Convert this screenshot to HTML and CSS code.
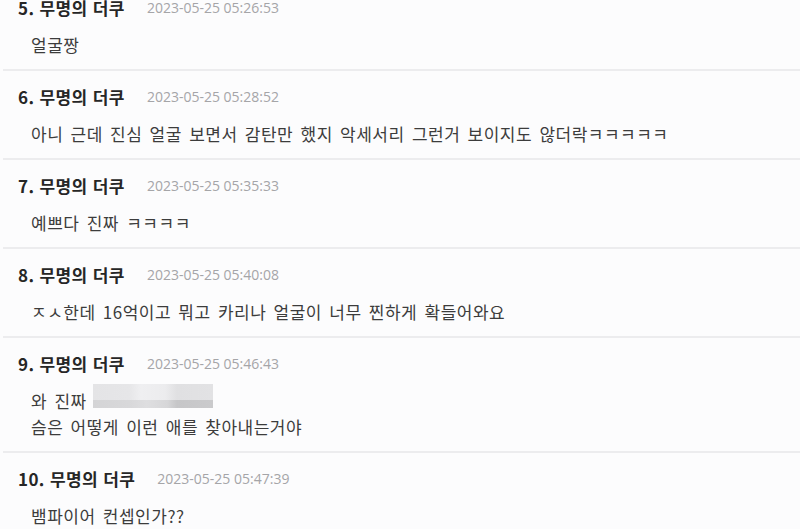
FILE: index.html
```html
<!DOCTYPE html>
<html lang="ko">
<head>
<meta charset="utf-8">
<title>댓글</title>
<link rel="stylesheet" href="styles.css">
</head>
<body>
<ul class="comments">
  <li class="comment">
    <div class="meta"><span class="author">5. 무명의 더쿠</span><span class="time">2023-05-25 05:26:53</span></div>
    <p class="text">얼굴짱</p>
  </li>
  <li class="comment">
    <div class="meta"><span class="author">6. 무명의 더쿠</span><span class="time">2023-05-25 05:28:52</span></div>
    <p class="text">아니 근데 진심 얼굴 보면서 감탄만 했지 악세서리 그런거 보이지도 않더락ㅋㅋㅋㅋㅋ</p>
  </li>
  <li class="comment">
    <div class="meta"><span class="author">7. 무명의 더쿠</span><span class="time">2023-05-25 05:35:33</span></div>
    <p class="text">예쁘다 진짜 ㅋㅋㅋㅋ</p>
  </li>
  <li class="comment">
    <div class="meta"><span class="author">8. 무명의 더쿠</span><span class="time">2023-05-25 05:40:08</span></div>
    <p class="text">ㅈㅅ한데 16억이고 뭐고 카리나 얼굴이 너무 찐하게 확들어와요</p>
  </li>
  <li class="comment">
    <div class="meta"><span class="author">9. 무명의 더쿠</span><span class="time">2023-05-25 05:46:43</span></div>
    <p class="text"><span class="line">와 진짜<span class="masked"></span></span><span class="line">슴은 어떻게 이런 애를 찾아내는거야</span></p>
  </li>
  <li class="comment">
    <div class="meta"><span class="author">10. 무명의 더쿠</span><span class="time">2023-05-25 05:47:39</span></div>
    <p class="text">뱀파이어 컨셉인가??</p>
  </li>
</ul>
</body>
</html>
```

FILE: styles.css
```css
html, body {
  margin: 0;
  padding: 0;
  background: #fcfcfd;
  overflow: hidden;
}

body {
  font-family: "Noto Sans CJK KR", "Noto Sans", sans-serif;
  color: #333;
}

.comments {
  list-style: none;
  margin: -18px 0 0 3px;
  padding: 0;
  display: flex;
  flex-direction: column;
}

.comment {
  padding: 16px 0 11px 15px;
  border-bottom: 2px solid #ececee;
}

.meta {
  display: flex;
  align-items: center;
  gap: 22px;
  height: 20px;
}

.author {
  font-size: 17px;
  font-weight: 700;
  letter-spacing: 0.4px;
  color: #262626;
  line-height: 20px;
}

.time {
  font-family: "Open Sans", "Noto Sans", sans-serif;
  font-size: 14px;
  color: #a5a5a8;
  line-height: 20px;
}

.text {
  margin: 14px 0 0 13px;
  font-size: 17px;
  letter-spacing: 0.5px;
  word-spacing: 2px;
  line-height: 26px;
  color: #3c3c3c;
}

.line {
  display: flex;
  align-items: center;
  height: 26px;
  white-space: pre;
}

/* blurred-out part of a comment */
.masked {
  align-self: flex-start;
  flex: none;
  width: 120px;
  height: 24px;
  margin: -4px 0 0 6px;
  background:
    linear-gradient(to right, #d4d4d6 0%, #d8d8da 30%, #dedee0 45%, #d6d6d8 62%, #c6c6c8 70%, #cacacc 100%) bottom / 100% 8px no-repeat,
    linear-gradient(to right, #e4e4e6 0%, #e6e6e8 30%, #efeff1 40%, #ececee 60%, #e0e0e2 70%, #e2e2e4 100%);
  filter: blur(0.7px);
}
```
